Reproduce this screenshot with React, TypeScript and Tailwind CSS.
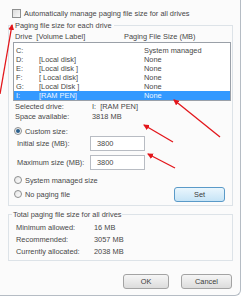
import React from 'react';

const drives = [
  { letter: 'C:', label: '', size: 'System managed' },
  { letter: 'D:', label: '[Local disk]', size: 'None' },
  { letter: 'E:', label: '[Local disk ]', size: 'None' },
  { letter: 'F:', label: '[ Local disk]', size: 'None' },
  { letter: 'G:', label: '[Local Disk ]', size: 'None' },
  { letter: 'I:', label: '[RAM PEN]', size: 'None', selected: true },
];

function Radio({ checked }: { checked?: boolean }) {
  return (
    <span className="w-[8px] h-[8px] rounded-full border border-[#8e8f8f] bg-gradient-to-br from-[#e6e6e6] to-[#fdfdfd] flex items-center justify-center flex-shrink-0">
      {checked && <span className="w-[4px] h-[4px] rounded-full bg-[#2a5f8c]" />}
    </span>
  );
}

function Button({ children, width, focused }: { children: React.ReactNode; width: string; focused?: boolean }) {
  return (
    <div
      className={`${width} h-[15px] rounded-[3px] border flex items-center justify-center text-[#3a3a3a] ${
        focused
          ? 'border-[#5a9ac8] bg-gradient-to-b from-[#eaf6fd] to-[#c6e4f6]'
          : 'border-[#a3a3a3] bg-gradient-to-b from-[#f6f6f6] to-[#dcdcdc]'
      }`}
    >
      {children}
    </div>
  );
}

function SizeInput({ label, value }: { label: string; value: string }) {
  return (
    <div className="flex items-center h-[15px] pl-[4px]">
      <span className="w-[73px]">{label}</span>
      <div className="w-[55px] h-[15px] border border-[#b8bcc3] bg-white flex items-center pl-[6px]">{value}</div>
    </div>
  );
}

export default function App() {
  return (
    <div className="relative w-[245px] h-[300px] bg-white overflow-hidden text-[7.4px] leading-[9px] text-[#474747] font-['Liberation_Sans',Arial,sans-serif]">
      <div className="w-[241px] h-[296px] bg-[#fbfbfb] border-r border-b border-[#b5bcc4] rounded-br-[6px] flex flex-col">
        {/* Auto manage */}
        <div className="flex items-center gap-[3px] mt-[9px] ml-[12px]">
          <span className="w-[9px] h-[9px] border border-[#8e8f8f] bg-gradient-to-br from-[#dcdcdc] to-[#f8f8f8]" />
          <span>Automatically manage paging file size for all drives</span>
        </div>

        {/* Per drive */}
        <fieldset className="ml-[8px] mt-[3px] w-[225px] border border-[#dde3e8] pl-[4px] pr-[1px] pb-[3px]">
          <legend className="px-[2px]">Paging file size for each drive</legend>
          <div className="flex mt-[2px] pl-[2px]">
            <span className="w-[109px] whitespace-pre">Drive  [Volume Label]</span>
            <span>Paging File Size (MB)</span>
          </div>
          <div className="mt-[1px] w-[218px] border border-[#9aa0a8] bg-white pt-[3px] px-0">
            {drives.map((d) => (
              <div
                key={d.letter}
                className={`flex h-[9px] items-center pl-[2px] whitespace-pre ${d.selected ? 'bg-[#3399ff] text-[#eef6ff]' : ''}`}
              >
                <span className="w-[23px]">{d.letter}</span>
                <span className="w-[105px]">{d.label}</span>
                <span>{d.size}</span>
              </div>
            ))}
          </div>

          <div className="mt-[1px] pl-[2px] leading-[10px]">
            <div className="flex">
              <span className="w-[77px]">Selected drive:</span>
              <span className="whitespace-pre">I:  [RAM PEN]</span>
            </div>
            <div className="flex">
              <span className="w-[77px]">Space available:</span>
              <span>3818 MB</span>
            </div>
          </div>

          <div className="flex items-center gap-[3px] h-[10px] mt-[4px] pl-[1px]">
            <Radio checked />
            <span>Custom size:</span>
          </div>
          <SizeInput label="Initial size (MB):" value="3800" />
          <div className="mt-[4px]">
            <SizeInput label="Maximum size (MB):" value="3800" />
          </div>
          <div className="flex items-center gap-[3px] h-[10px] mt-[5px] pl-[1px]">
            <Radio />
            <span>System managed size</span>
          </div>
          <div className="flex items-center justify-between h-[16px] mt-[1px] pl-[1px] pr-[6px]">
            <div className="flex items-center gap-[3px]">
              <Radio />
              <span>No paging file</span>
            </div>
            <Button width="w-[51px]" focused>
              Set
            </Button>
          </div>
        </fieldset>

        {/* Totals */}
        <fieldset className="ml-[8px] mt-[4px] w-[225px] border border-[#dde3e8] pl-[4px] pb-[2px]">
          <legend className="px-[1px] -ml-[1px]">Total paging file size for all drives</legend>
          <div className="mt-[3px] pl-[3px] leading-[12px]">
            <div className="flex">
              <span className="w-[78px]">Minimum allowed:</span>
              <span>16 MB</span>
            </div>
            <div className="flex">
              <span className="w-[78px]">Recommended:</span>
              <span>3057 MB</span>
            </div>
            <div className="flex">
              <span className="w-[78px]">Currently allocated:</span>
              <span>2038 MB</span>
            </div>
          </div>
        </fieldset>

        <div className="flex justify-end gap-[12px] mt-[13px] pr-[8px]">
          <Button width="w-[46px]">OK</Button>
          <Button width="w-[51px]">Cancel</Button>
        </div>
      </div>

      {/* Annotation arrows */}
      <svg className="absolute inset-0 pointer-events-none" width="245" height="300" viewBox="0 0 245 300">
        <defs>
          <marker id="head" markerWidth="6" markerHeight="6" refX="5" refY="3" orient="auto" markerUnits="userSpaceOnUse">
            <path d="M0,0 L6,3 L0,6 Z" fill="#e3161b" />
          </marker>
        </defs>
        <g stroke="#e3161b" strokeWidth="1.3" fill="none" markerEnd="url(#head)">
          <line x1="0" y1="94" x2="12" y2="25" />
          <line x1="220" y1="137" x2="174" y2="100" />
          <line x1="173" y1="142" x2="144" y2="125" />
          <line x1="175" y1="168" x2="148" y2="154" />
        </g>
      </svg>
    </div>
  );
}
